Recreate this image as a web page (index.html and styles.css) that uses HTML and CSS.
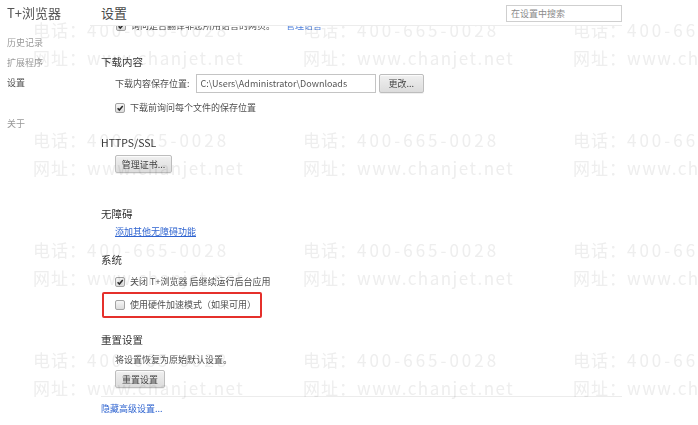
FILE: index.html
```html
<!DOCTYPE html>
<html lang="zh-CN">
<head>
    <meta charset="UTF-8">
    <meta name="viewport" content="width=device-width, initial-scale=1.0">
    <title>设置 - T+浏览器</title>
    <link rel="stylesheet" href="styles.css">
</head>
<body>

    <div class="page">
        <aside class="sidebar">
            <div class="brand">T+浏览器</div>
            <nav class="nav">
                <a class="nav-item">历史记录</a>
                <a class="nav-item">扩展程序</a>
                <a class="nav-item active">设置</a>
                <a class="nav-item about">关于</a>
            </nav>
        </aside>

        <main class="main">
            <header class="topbar">
                <h1>设置</h1>
                <input class="search" type="text" placeholder="在设置中搜索">
            </header>

            <div class="content">
                <div class="option cut-row">
                    <span class="check"><svg viewBox="0 0 10 10"><path d="M2 5.2 L4.2 7.6 L8.4 2.4"/></svg></span>
                    <span>询问是否翻译非您所用语言的网页。</span>
                    <a class="link small-link">管理语言</a>
                </div>

                <section class="section downloads">
                    <h3 class="section-title">下载内容</h3>
                    <div class="section-body">
                        <div class="location-row">
                            <label>下载内容保存位置:</label>
                            <input class="path" type="text" value="C:\Users\Administrator\Downloads">
                            <button class="btn">更改...</button>
                        </div>
                        <div class="option ask-row">
                            <span class="check"><svg viewBox="0 0 10 10"><path d="M2 5.2 L4.2 7.6 L8.4 2.4"/></svg></span>
                            <span>下载前询问每个文件的保存位置</span>
                        </div>
                    </div>
                </section>

                <section class="section https">
                    <h3 class="section-title">HTTPS/SSL</h3>
                    <div class="section-body">
                        <button class="btn cert-btn">管理证书...</button>
                    </div>
                </section>

                <section class="section a11y">
                    <h3 class="section-title">无障碍</h3>
                    <div class="section-body">
                        <a class="link underline a11y-link">添加其他无障碍功能</a>
                    </div>
                </section>

                <section class="section system">
                    <h3 class="section-title">系统</h3>
                    <div class="section-body">
                        <div class="option bg-row">
                            <span class="check"><svg viewBox="0 0 10 10"><path d="M2 5.2 L4.2 7.6 L8.4 2.4"/></svg></span>
                            <span>关闭 T+浏览器 后继续运行后台应用</span>
                        </div>
                        <div class="highlight">
                            <div class="option">
                                <span class="check"></span>
                                <span>使用硬件加速模式（如果可用）</span>
                            </div>
                        </div>
                    </div>
                </section>

                <section class="section reset">
                    <h3 class="section-title">重置设置</h3>
                    <div class="section-body">
                        <p class="desc">将设置恢复为原始默认设置。</p>
                        <button class="btn reset-btn">重置设置</button>
                    </div>
                </section>

                <div class="footer">
                    <a class="link">隐藏高级设置...</a>
                </div>
            </div>
        </main>
    </div>

    <!-- watermark over the whole page -->
    <div class="watermark">
        <div class="wm-cell"><div><span class="wm-key">电话：</span><span class="wm-tel">400-665-0028</span></div><div><span class="wm-key">网址：</span><span class="wm-url">www.chanjet.net</span></div></div>
        <div class="wm-cell"><div><span class="wm-key">电话：</span><span class="wm-tel">400-665-0028</span></div><div><span class="wm-key">网址：</span><span class="wm-url">www.chanjet.net</span></div></div>
        <div class="wm-cell"><div><span class="wm-key">电话：</span><span class="wm-tel">400-665-0028</span></div><div><span class="wm-key">网址：</span><span class="wm-url">www.chanjet.net</span></div></div>
        <div class="wm-cell"><div><span class="wm-key">电话：</span><span class="wm-tel">400-665-0028</span></div><div><span class="wm-key">网址：</span><span class="wm-url">www.chanjet.net</span></div></div>
        <div class="wm-cell"><div><span class="wm-key">电话：</span><span class="wm-tel">400-665-0028</span></div><div><span class="wm-key">网址：</span><span class="wm-url">www.chanjet.net</span></div></div>
        <div class="wm-cell"><div><span class="wm-key">电话：</span><span class="wm-tel">400-665-0028</span></div><div><span class="wm-key">网址：</span><span class="wm-url">www.chanjet.net</span></div></div>
        <div class="wm-cell"><div><span class="wm-key">电话：</span><span class="wm-tel">400-665-0028</span></div><div><span class="wm-key">网址：</span><span class="wm-url">www.chanjet.net</span></div></div>
        <div class="wm-cell"><div><span class="wm-key">电话：</span><span class="wm-tel">400-665-0028</span></div><div><span class="wm-key">网址：</span><span class="wm-url">www.chanjet.net</span></div></div>
        <div class="wm-cell"><div><span class="wm-key">电话：</span><span class="wm-tel">400-665-0028</span></div><div><span class="wm-key">网址：</span><span class="wm-url">www.chanjet.net</span></div></div>
        <div class="wm-cell"><div><span class="wm-key">电话：</span><span class="wm-tel">400-665-0028</span></div><div><span class="wm-key">网址：</span><span class="wm-url">www.chanjet.net</span></div></div>
        <div class="wm-cell"><div><span class="wm-key">电话：</span><span class="wm-tel">400-665-0028</span></div><div><span class="wm-key">网址：</span><span class="wm-url">www.chanjet.net</span></div></div>
        <div class="wm-cell"><div><span class="wm-key">电话：</span><span class="wm-tel">400-665-0028</span></div><div><span class="wm-key">网址：</span><span class="wm-url">www.chanjet.net</span></div></div>
    </div>

</body>
</html>
```

FILE: styles.css
```css
*,
::after,
::before {
    margin: 0;
    padding: 0;
    box-sizing: border-box;
}

html {
    font-family: "Noto Sans CJK SC", "Noto Sans", sans-serif;
    font-size: 9px;
    line-height: 12px;
    color: #505050;
}

body {
    background-color: #fff;
    position: relative;
    height: 100vh;
    overflow: hidden;
}

.page {
    display: flex;
    height: 100%;
}

/* left column */
.sidebar {
    width: 90px;
    padding: 4px 0 0 7px;
    flex-shrink: 0;
}

.brand {
    font-size: 13px;
    line-height: 17px;
    color: #555;
}

.nav {
    display: flex;
    flex-direction: column;
    margin-top: 12px;
}

.nav-item {
    line-height: 20px;
    color: #999;
}

.nav-item.active {
    color: #505050;
}

.nav-item.about {
    margin-top: 21px;
}

/* main column */
.main {
    flex: 1;
    padding-right: 76px;
    display: flex;
    flex-direction: column;
}

.topbar {
    height: 26px;
    flex-shrink: 0;
    display: flex;
    align-items: center;
    justify-content: space-between;
    padding-left: 11px;
    border-bottom: 1px solid #ececec;
    background-color: #fff;
    position: relative;
    z-index: 1;
}

.topbar h1 {
    font-size: 13px;
    line-height: 17px;
    font-weight: normal;
    color: #4a4a4a;
}

.search {
    width: 116px;
    height: 17px;
    border: 1px solid #cfcfcf;
    font-family: inherit;
    font-size: 9px;
    padding: 0 4px;
    margin-top: 1px;
    color: #555;
}

.search::placeholder {
    color: #8a8a8a;
}

.content {
    margin-top: -6px; /* first row slides under the header */
    padding-left: 11px;
}

.section-title {
    font-size: 10.5px;
    line-height: 16px;
    font-weight: normal;
    color: #333;
}

.section-body {
    padding-left: 14px;
}

.option {
    display: flex;
    align-items: center;
    gap: 5px;
    line-height: 12px;
    white-space: nowrap;
}

.cut-row {
    padding-left: 15px;
}

.check {
    width: 10px;
    height: 10px;
    border: 1px solid #a3a3a3;
    border-radius: 2px;
    background: linear-gradient(#f6f6f6, #dcdcdc);
    display: flex;
    flex-shrink: 0;
}

.check svg {
    width: 100%;
    height: 100%;
    fill: none;
    stroke: #2b2b2b;
    stroke-width: 1.9;
}

.link {
    color: #2f64d0;
}

.small-link {
    margin-left: 6px;
    color: #4d7fdb;
}

.underline {
    text-decoration: underline;
}

.btn {
    height: 18px;
    padding: 0 8px;
    font-family: inherit;
    font-size: 9px;
    color: #444;
    border: 1px solid #bdbdbd;
    border-radius: 2px;
    background: linear-gradient(#f0f0f0, #dcdcdc);
    box-shadow: 0 1px 0 rgba(0, 0, 0, 0.06), inset 0 1px 1px rgba(255, 255, 255, 0.8);
}

.path {
    width: 180px;
    height: 19px;
    border: 1px solid #c4c4c4;
    padding: 0 4px;
    font-family: inherit;
    font-size: 9px;
    color: #555;
}

/* vertical rhythm */
.downloads {
    margin-top: 22px;
}

.location-row {
    display: flex;
    align-items: center;
    gap: 6px;
    margin-top: 4px;
    white-space: nowrap;
}

.location-row .btn {
    height: 19px;
    margin-left: -3px;
    padding: 0 9px;
}

.ask-row {
    margin-top: 9px;
}

.https {
    margin-top: 21px;
}

.cert-btn {
    margin-top: 4px;
    width: 57px;
    padding: 0;
}

.a11y {
    margin-top: 33px;
}

.a11y-link {
    display: inline-block;
    margin-top: 4px;
}

.system {
    margin-top: 14px;
}

.bg-row {
    margin-top: 8px;
}

.highlight {
    width: 160px;
    height: 26px;
    margin: 4px 0 0 -13px;
    padding: 5px 11px;
    border: 2px solid #e5302b;
    border-radius: 2px;
}

.reset {
    margin-top: 14px;
}

.desc {
    margin-top: 6px;
}

.reset-btn {
    margin-top: 4px;
    width: 50px;
    padding: 0;
}

.footer {
    margin-top: 8px;
    padding-top: 6px;
    border-top: 1px solid #ececec;
}

/* watermark */
.watermark {
    position: absolute;
    inset: 0;
    pointer-events: none;
    overflow: hidden;
    display: grid;
    grid-template-columns: repeat(3, 270px);
    grid-auto-rows: 110px;
    padding: 16px 0 0 33px;
    font-family: "Noto Sans CJK SC", sans-serif;
    font-size: 17px;
    line-height: 28px;
    color: #eeeeee;
    mix-blend-mode: multiply;
    filter: grayscale(1);
    white-space: nowrap;
}

.wm-key {
    letter-spacing: 1px;
}

.wm-tel {
    letter-spacing: 3px;
}

.wm-url {
    letter-spacing: 1.5px;
}
```
